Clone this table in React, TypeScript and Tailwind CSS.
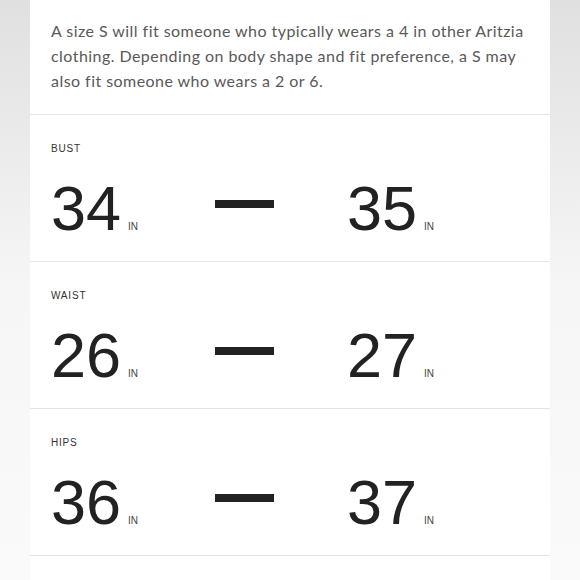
import React from 'react';

type Measure = {
    label: string;
    min: number;
    max: number;
};

const measures: Measure[] = [
    { label: 'BUST', min: 34, max: 35 },
    { label: 'WAIST', min: 26, max: 27 },
    { label: 'HIPS', min: 36, max: 37 },
];

const helvetica = { fontFamily: '"Liberation Sans", Arial, sans-serif' };

// a single number with its small "IN" unit sitting on the baseline
const Value = ({ n, className = '' }: { n: number; className?: string }) => (
    <div className={`flex items-baseline leading-none ${className}`}>
        <span className="text-[63px] leading-[64px] text-[#222]">{n}</span>
        <span className="ml-[7px] text-[10px] text-[#444]">IN</span>
    </div>
);

const MeasureRow = ({ m }: { m: Measure }) => (
    <div className="border-b border-[#e4e4e4] px-[21px] pt-[26px] pb-[21px]" style={helvetica}>
        <p className="text-[10px] leading-[16px] tracking-[0.08em] text-[#333]">{m.label}</p>
        <div className="mt-[19px] flex items-start">
            <Value n={m.min} className="w-[164px]" />
            <div className="mt-[24px] h-[8px] w-[59px] bg-[#222]" />
            <Value n={m.max} className="ml-[73px]" />
        </div>
    </div>
);

export default function App() {
    return (
        <div className="flex h-[580px] w-[580px] justify-center overflow-hidden bg-gradient-to-b from-[#e0e0e0] via-[#f6f6f6] to-[#fafafa]">
            <div className="h-full w-[520px] bg-white">
                <div
                    className="border-b border-[#e4e4e4] px-[21px] pt-[18px] pb-[21px] text-[16px] leading-[25px] tracking-[0.45px] text-[#595959]"
                    style={{ fontFamily: 'Lato, "Open Sans", sans-serif' }}
                >
                    <span className="block whitespace-nowrap">A size S will fit someone who typically wears a 4 in other Aritzia</span>
                    <span className="block whitespace-nowrap">clothing. Depending on body shape and fit preference, a S may</span>
                    <span className="block whitespace-nowrap">also fit someone who wears a 2 or 6.</span>
                </div>
                {measures.map(m => (
                    <MeasureRow key={m.label} m={m} />
                ))}
            </div>
        </div>
    );
}
